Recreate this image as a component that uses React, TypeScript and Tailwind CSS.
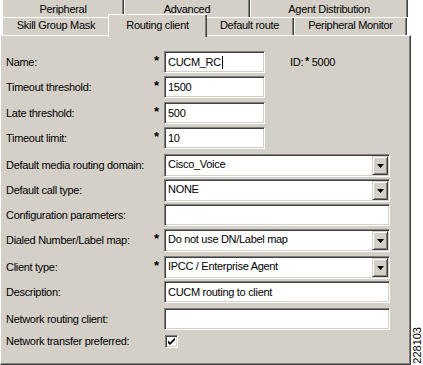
import React from 'react';

// Windows-classic "Routing client" property page

const FACE = '#d4d0c8';

const sunken =
  'border border-t-[#808080] border-l-[#808080] border-b-white border-r-white bg-white shadow-[inset_1px_1px_0_#404040,inset_-1px_-1px_0_#d4d0c8]';

type Row = {
  label: string;
  req?: boolean;
  kind: 'text' | 'short' | 'select' | 'check';
  value?: string;
  h: string;
};

const ROWS: Row[] = [
  { label: 'Name:', req: true, kind: 'short', value: 'CUCM_RC', h: 'h-[25px]' },
  { label: 'Timeout threshold:', req: true, kind: 'short', value: '1500', h: 'h-[26px]' },
  { label: 'Late threshold:', req: true, kind: 'short', value: '500', h: 'h-[25px]' },
  { label: 'Timeout limit:', req: true, kind: 'short', value: '10', h: 'h-[27px]' },
  { label: 'Default media routing domain:', kind: 'select', value: 'Cisco_Voice', h: 'h-[25px]' },
  { label: 'Default call type:', kind: 'select', value: 'NONE', h: 'h-[25px]' },
  { label: 'Configuration parameters:', kind: 'text', value: '', h: 'h-[25px]' },
  { label: 'Dialed Number/Label map:', req: true, kind: 'select', value: 'Do not use DN/Label map', h: 'h-[27px]' },
  { label: 'Client type:', req: true, kind: 'select', value: 'IPCC / Enterprise Agent', h: 'h-[25px]' },
  { label: 'Description:', kind: 'text', value: 'CUCM routing to client', h: 'h-[27px]' },
  { label: 'Network routing client:', kind: 'text', value: '', h: 'h-[27px]' },
  { label: 'Network transfer preferred:', kind: 'check', h: 'h-[16px]' },
];

const TOP_TABS = [
  { label: 'Peripheral', w: 'w-[122px]' },
  { label: 'Advanced', w: 'w-[126px]' },
  { label: 'Agent Distribution', w: 'w-[158px]' },
];

const tabCls =
  'flex items-center justify-center bg-[#d4d0c8] shadow-[inset_1px_0_0_#fff,inset_-1px_0_0_#404040,inset_-2px_0_0_#808080]';
const frontTab =
  'flex h-[18px] items-center justify-center bg-[#d4d0c8] pb-px shadow-[inset_1px_1px_0_#fff,inset_-1px_0_0_#404040,inset_-2px_0_0_#808080]';

function DropButton() {
  return (
    <div className="my-[1px] mr-[1px] flex w-[16px] items-center justify-center bg-[#d4d0c8] border border-t-[#d4d0c8] border-l-[#d4d0c8] border-b-[#404040] border-r-[#404040] shadow-[inset_1px_1px_0_#fff,inset_-1px_-1px_0_#808080]">
      <svg width="7" height="4" viewBox="0 0 7 4">
        <path d="M0 0h7L3.5 4z" fill="#000" />
      </svg>
    </div>
  );
}

function Control({ row }: { row: Row }) {
  if (row.kind === 'check') {
    return (
      <div className={`${sunken} ml-[1px] flex h-[13px] w-[13px] items-center justify-center`}>
        <svg width="9" height="9" viewBox="0 0 9 9">
          <path d="M1 3.5l2 2 5-5v2.5L3 8 1 6z" fill="#000" />
        </svg>
      </div>
    );
  }
  if (row.kind === 'select') {
    return (
      <div className={`${sunken} flex h-[23px] w-[226px]`}>
        <span className="flex-1 truncate pl-[3px] leading-[19px]">{row.value}</span>
        <DropButton />
      </div>
    );
  }
  const w = row.kind === 'short' ? 'w-[101px]' : 'w-[226px]';
  return (
    <div className={`${sunken} flex h-[22px] ${w} items-center pl-[3px]`}>
      <span>{row.value}</span>
      {row.label === 'Name:' && <span className="ml-[1px] h-[13px] w-px bg-black" />}
    </div>
  );
}

export default function App() {
  return (
    <div
      className="flex h-[365px] w-[423px] overflow-hidden bg-white text-[11px] tracking-[-0.3px] text-black"
      style={{ fontFamily: '"Liberation Sans", Arial, sans-serif' }}
    >
      <div className="flex w-[411px] flex-col">
        {/* tab strip, back row */}
        <div className="flex h-[17px] pl-[2px]">
          {TOP_TABS.map((t) => (
            <div key={t.label} className={`${tabCls} ${t.w} pt-[2px]`}>
              {t.label}
            </div>
          ))}
        </div>

        {/* tab strip, front row */}
        <div className="flex h-[18px] items-end pl-[2px]">
          <div className={`${frontTab} w-[108px]`}>Skill Group Mask</div>
          <div className="relative z-10 -mx-[2px] -mb-[2px] flex h-[23px] w-[99px] items-start justify-center bg-[#d4d0c8] pt-[3px] shadow-[inset_1px_1px_0_#fff,inset_-1px_0_0_#404040,inset_-2px_0_0_#808080]">
            Routing client
          </div>
          <div className={`${frontTab} w-[89px]`}>Default route</div>
          <div className={`${frontTab} w-[113px]`}>Peripheral Monitor</div>
        </div>

        {/* page */}
        <div
          className="flex flex-1 flex-col pl-[5px] pt-[15px] border border-t-white border-l-white border-b-[#404040] border-r-[#404040] shadow-[inset_-1px_-1px_0_#808080]"
          style={{ background: FACE }}
        >
          {ROWS.map((r) => (
            <div key={r.label} className={`flex ${r.h} items-start`}>
              <div
                className={`flex w-[145px] items-center whitespace-nowrap ${r.kind === 'check' ? 'h-[13px]' : 'h-[22px]'}`}
              >
                {r.label}
              </div>
              <div className="flex h-[22px] w-[11px] items-start justify-center pt-[3px] text-[13px] font-bold leading-none">
                {r.req ? '*' : ''}
              </div>
              <div className="ml-[2px]">
                <Control row={r} />
              </div>
              {r.label === 'Name:' && (
                <div className="ml-[25px] flex h-[22px] items-center">
                  <span>ID:</span>
                  <span className="ml-[2px] text-[10px] font-bold leading-none">*</span>
                  <span className="ml-[3px]">5000</span>
                </div>
              )}
            </div>
          ))}
        </div>
      </div>

      {/* figure number */}
      <div className="flex flex-1 items-end justify-center pb-[1px]">
        <span className="rotate-180 text-[11px] leading-none tracking-normal [writing-mode:vertical-rl]">228103</span>
      </div>
    </div>
  );
}
